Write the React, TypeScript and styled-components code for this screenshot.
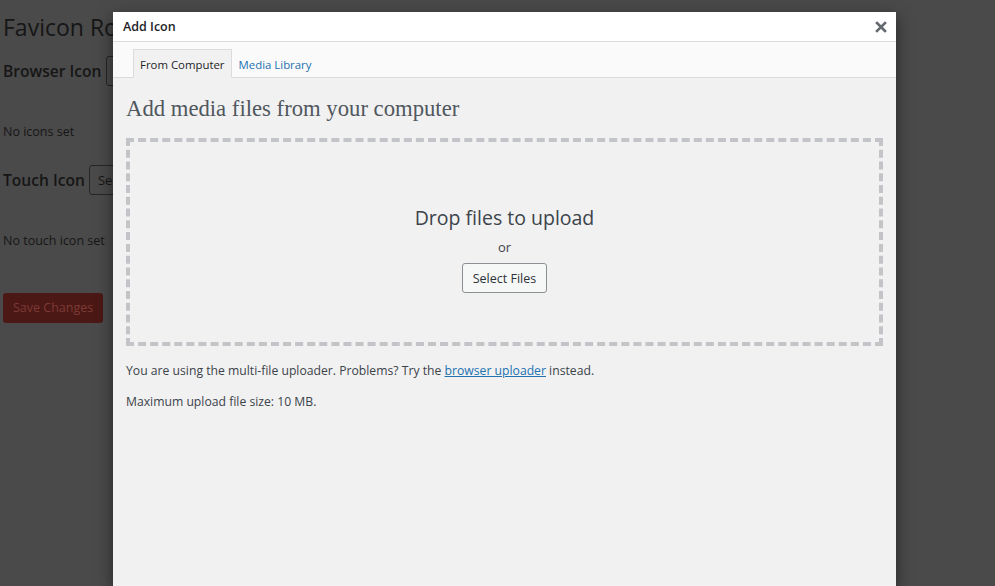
import React from 'react';
import styled, { createGlobalStyle } from 'styled-components';

const GlobalStyle = createGlobalStyle`
  html, body {
    margin: 0;
    padding: 0;
    background: #4a4a4a;
    font-family: 'Open Sans', 'Noto Sans', sans-serif;
    overflow: hidden;
  }
`;

const Page = styled.div`
  position: relative;
  width: 995px;
  height: 586px;
  background: #4a4a4a;
  color: #161616;
`;

const Settings = styled.div`
  padding: 12px 0 0 3px;
`;

const PageTitle = styled.h1`
  margin: 0 0 14px;
  font-size: 23px;
  font-weight: 400;
  line-height: 30px;
`;

const FieldRow = styled.div<{ $top?: number }>`
  display: flex;
  align-items: center;
  gap: 4px;
  margin-top: ${p => p.$top ?? 0}px;
`;

const FieldLabel = styled.h2`
  margin: 0;
  font-size: 15.6px;
  font-weight: 600;
  line-height: 28px;
`;

const DimButton = styled.div`
  height: 28px;
  padding: 0 8px;
  border: 1px solid #262626;
  border-radius: 3px;
  font-size: 13px;
  line-height: 28px;
  color: #161616;
`;

const Note = styled.p<{ $gap: number }>`
  margin: ${p => p.$gap}px 0 0;
  font-size: 12.5px;
  line-height: 18px;
`;

const SaveButton = styled.div`
  display: inline-block;
  margin-top: 43px;
  padding: 0 10px;
  height: 30px;
  line-height: 30px;
  background: #4b1815;
  border-radius: 3px;
  color: #7d3a35;
  font-size: 12.5px;
`;

const Modal = styled.div`
  position: absolute;
  left: 113px;
  top: 12px;
  width: 783px;
  bottom: 0;
  background: #f1f1f1;
  box-shadow: 0 5px 15px rgba(0, 0, 0, 0.5);
  display: flex;
  flex-direction: column;
`;

const ModalHeader = styled.div`
  height: 29px;
  background: #fff;
  border-bottom: 1px solid #dcdcde;
  display: flex;
  align-items: center;
  justify-content: space-between;
  padding: 0 8px 0 10px;
`;

const ModalTitle = styled.h1`
  margin: 0;
  font-size: 12.5px;
  font-weight: 600;
  color: #1d2327;
`;

const CloseButton = styled.button`
  border: 0;
  background: none;
  padding: 0;
  width: 14px;
  height: 14px;
  display: flex;
  align-items: center;
  justify-content: center;
  cursor: pointer;
`;

const TabBar = styled.div`
  height: 35px;
  background: #fafafa;
  border-bottom: 1px solid #dcdcde;
  display: flex;
  align-items: flex-end;
  padding-left: 20px;
`;

const Tab = styled.div<{ $active?: boolean }>`
  height: 29px;
  padding: 0 6px;
  margin-bottom: -1px;
  box-sizing: border-box;
  font-size: 11.4px;
  line-height: 30px;
  color: ${p => (p.$active ? '#1d2327' : '#2271b1')};
  background: ${p => (p.$active ? '#f1f1f1' : 'transparent')};
  border: 1px solid ${p => (p.$active ? '#dcdcde' : 'transparent')};
  border-bottom-color: ${p => (p.$active ? '#f1f1f1' : 'transparent')};
`;

const Content = styled.div`
  padding: 16px 13px 0 13px;
  color: #3c434a;
`;

const Heading = styled.h2`
  margin: 0 0 14px;
  font-family: 'Liberation Serif', 'DejaVu Serif', serif;
  font-size: 22.7px;
  font-weight: 400;
  line-height: 30px;
  color: #50575e;
`;

const DropZone = styled.div`
  height: 208px;
  border: 4px dashed #c3c4c7;
  box-sizing: border-box;
  display: flex;
  flex-direction: column;
  align-items: center;
  justify-content: center;
  padding-top: 13px;
`;

const DropText = styled.p`
  margin: 0;
  font-size: 19.5px;
  line-height: 28px;
  color: #3c434a;
`;

const OrText = styled.p`
  margin: 5px 0 6px;
  font-size: 13px;
  line-height: 20px;
  color: #3c434a;
`;

const SelectButton = styled.button`
  height: 30px;
  padding: 0 10px;
  font-family: 'Open Sans', 'Noto Sans', sans-serif;
  font-size: 12.5px;
  color: #2c3338;
  background: #f6f7f7;
  border: 1px solid #8c8f94;
  border-radius: 3px;
`;

const Info = styled.p<{ $top: number }>`
  margin: ${p => p.$top}px 0 0;
  font-size: 12.2px;
  line-height: 17px;
  color: #3c434a;
`;

const Link = styled.a`
  color: #2271b1;
  text-decoration: underline;
`;

export default function App() {
  return (
    <Page>
      <GlobalStyle />
      <Settings>
        <PageTitle>Favicon Rotator</PageTitle>
        <FieldRow>
          <FieldLabel>Browser Icon</FieldLabel>
          <DimButton>Select</DimButton>
        </FieldRow>
        <Note $gap={37}>No icons set</Note>
        <FieldRow $top={24}>
          <FieldLabel>Touch Icon</FieldLabel>
          <DimButton>Select</DimButton>
        </FieldRow>
        <Note $gap={37}>No touch icon set</Note>
        <SaveButton>Save Changes</SaveButton>
      </Settings>

      <Modal>
        <ModalHeader>
          <ModalTitle>Add Icon</ModalTitle>
          <CloseButton aria-label="Close">
            <svg width="12" height="12" viewBox="0 0 12 12">
              <path d="M2 2 L10 10 M10 2 L2 10" stroke="#646970" strokeWidth="2.6" strokeLinecap="square" />
            </svg>
          </CloseButton>
        </ModalHeader>
        <TabBar>
          <Tab $active>From Computer</Tab>
          <Tab>Media Library</Tab>
        </TabBar>
        <Content>
          <Heading>Add media files from your computer</Heading>
          <DropZone>
            <DropText>Drop files to upload</DropText>
            <OrText>or</OrText>
            <SelectButton>Select Files</SelectButton>
          </DropZone>
          <Info $top={16}>
            You are using the multi-file uploader. Problems? Try the <Link>browser uploader</Link> instead.
          </Info>
          <Info $top={14}>Maximum upload file size: 10 MB.</Info>
        </Content>
      </Modal>
    </Page>
  );
}
